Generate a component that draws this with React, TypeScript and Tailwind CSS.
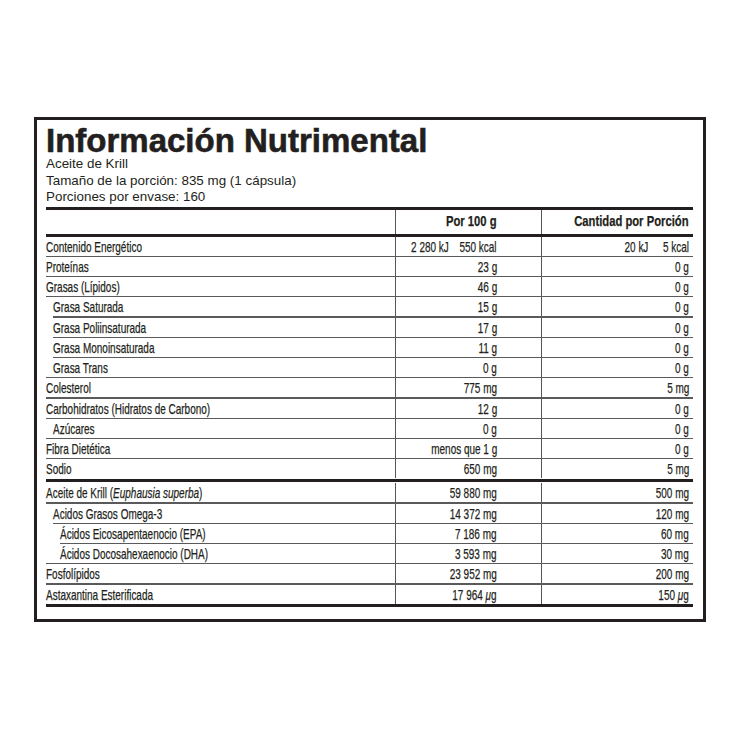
import React from 'react';

type Row = { label: React.ReactNode; indent: number; a: React.ReactNode; b: React.ReactNode };

const mu = <span className="italic">μ</span>;

const group1: Row[] = [
    {
        label: 'Contenido Energético',
        indent: 0,
        a: (
            <span className="flex gap-[16px]">
                <span>2 280 kJ</span>
                <span>550 kcal</span>
            </span>
        ),
        b: (
            <span className="flex gap-[22px]">
                <span>20 kJ</span>
                <span>5 kcal</span>
            </span>
        ),
    },
    { label: 'Proteínas', indent: 0, a: '23 g', b: '0 g' },
    { label: 'Grasas (Lípidos)', indent: 0, a: '46 g', b: '0 g' },
    { label: 'Grasa Saturada', indent: 1, a: '15 g', b: '0 g' },
    { label: 'Grasa Poliinsaturada', indent: 1, a: '17 g', b: '0 g' },
    { label: 'Grasa Monoinsaturada', indent: 1, a: '11 g', b: '0 g' },
    { label: 'Grasa Trans', indent: 1, a: '0 g', b: '0 g' },
    { label: 'Colesterol', indent: 0, a: '775 mg', b: '5 mg' },
    { label: 'Carbohidratos (Hidratos de Carbono)', indent: 0, a: '12 g', b: '0 g' },
    { label: 'Azúcares', indent: 1, a: '0 g', b: '0 g' },
    { label: 'Fibra Dietética', indent: 0, a: 'menos que 1 g', b: '0 g' },
    { label: 'Sodio', indent: 0, a: '650 mg', b: '5 mg' },
];

const group2: Row[] = [
    {
        label: (
            <>
                Aceite de Krill (<span className="italic">Euphausia superba</span>)
            </>
        ),
        indent: 0,
        a: '59 880 mg',
        b: '500 mg',
    },
    { label: 'Acidos Grasos Omega-3', indent: 1, a: '14 372 mg', b: '120 mg' },
    { label: 'Ácidos Eicosapentaenocio (EPA)', indent: 2, a: '7 186 mg', b: '60 mg' },
    { label: 'Ácidos Docosahexaenocio (DHA)', indent: 2, a: '3 593 mg', b: '30 mg' },
    { label: 'Fosfolípidos', indent: 0, a: '23 952 mg', b: '200 mg' },
    {
        label: 'Astaxantina Esterificada',
        indent: 0,
        a: <>17 964 {mu}g</>,
        b: <>150 {mu}g</>,
    },
];

const sepClass = ['ml-0', 'ml-[7px]', 'ml-[14px]'];
const padClass = ['pl-0', 'pl-[7px]', 'pl-[14px]'];

// no condensed face is installed, so the grotesque is squeezed horizontally
const narrowL = 'inline-block origin-left scale-x-[0.665] whitespace-nowrap';
const narrowR = 'inline-block origin-right scale-x-[0.665] whitespace-nowrap';

const Cells = ({ row }: { row: Row }) => (
    <div className="grid grid-cols-[349px_146px_152px] h-[19px] text-[15px] leading-[19px]">
        <div className={padClass[row.indent]}>
            <span className={narrowL}>{row.label}</span>
        </div>
        <div className="border-l-[1.5px] border-[#555] flex justify-end pr-[44px]">
            <span className={narrowR}>{row.a}</span>
        </div>
        <div className="border-l-[1.5px] border-[#555] flex justify-end pr-[4px]">
            <span className={narrowR}>{row.b}</span>
        </div>
    </div>
);

const Group = ({ rows }: { rows: Row[] }) => (
    <div className="flex flex-col">
        {rows.map((row, i) => {
            const next = rows[i + 1];
            const sep = next ? Math.min(row.indent, next.indent) : 0;
            return (
                <React.Fragment key={i}>
                    <Cells row={row} />
                    {next && (
                        <div className="flex h-[1.25px]">
                            <div className={`${sepClass[sep]} flex-1 bg-[#5a5a5a]`} />
                        </div>
                    )}
                </React.Fragment>
            );
        })}
    </div>
);

export default function App() {
    return (
        <div className="w-[740px] h-[740px] bg-white pt-[117px] pl-[34px] text-[#231f20]">
            <div className="w-[672px] h-[505px] border-[3px] border-[#231f20] pl-[9px] pr-[10px] flex flex-col">
                <h1 className="font-['Liberation_Sans',Arial,sans-serif] font-bold text-[33px] leading-[30px] mt-[6px] [-webkit-text-stroke:0.6px]">
                    Información Nutrimental
                </h1>
                <div className="font-['Liberation_Sans',Arial,sans-serif] text-[13.4px] leading-[16.5px]">
                    <p>Aceite de Krill</p>
                    <p>Tamaño de la porción: 835 mg (1 cápsula)</p>
                    <p>Porciones por envase: 160</p>
                </div>
                <div className="font-['Liberation_Sans',Arial,sans-serif] [-webkit-text-stroke:0.25px] mt-[1px]">
                    <div className="h-[3px] bg-[#231f20]" />
                    <div className="grid grid-cols-[349px_146px_152px] h-[24px] text-[15px] font-bold leading-[22px]">
                        <div />
                        <div className="border-l-[1.5px] border-[#555] flex justify-end pr-[44px]">
                            <span className="inline-block origin-right scale-x-[0.75] whitespace-nowrap">Por 100 g</span>
                        </div>
                        <div className="border-l-[1.5px] border-[#555] flex justify-end pr-[4px]">
                            <span className="inline-block origin-right scale-x-[0.75] whitespace-nowrap">
                                Cantidad por Porción
                            </span>
                        </div>
                    </div>
                    <div className="h-[3px] bg-[#231f20]" />
                    <Group rows={group1} />
                    <div className="flex h-[5px] flex-col justify-center">
                        <div className="h-[3px] bg-[#231f20]" />
                    </div>
                    <Group rows={group2} />
                    <div className="h-[3px] bg-[#231f20]" />
                </div>
            </div>
        </div>
    );
}
